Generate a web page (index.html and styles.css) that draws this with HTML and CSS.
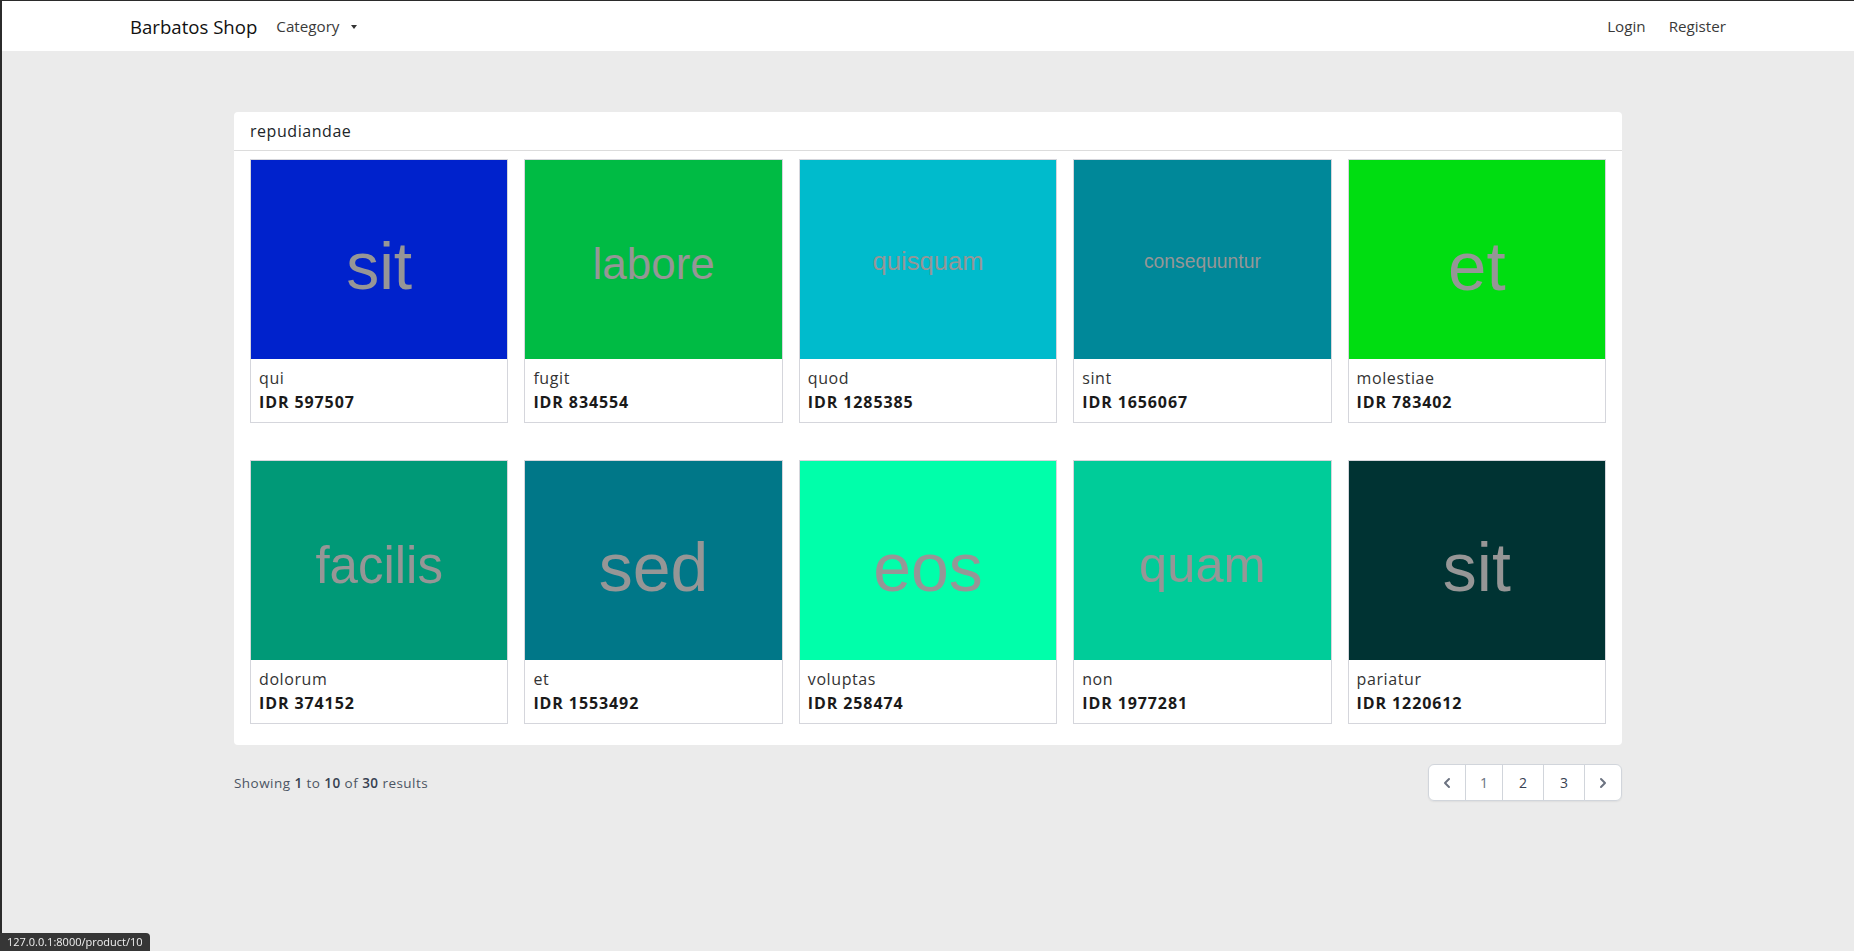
FILE: index.html
```html
<!DOCTYPE html>
<html lang="en">
<head>
<meta charset="utf-8">
<title>Barbatos Shop</title>
<link rel="stylesheet" href="styles.css">
</head>
<body>
<nav class="navbar">
  <div class="nav-inner">
    <div class="nav-left">
      <a class="brand" href="#">Barbatos Shop</a>
      <a class="nav-link dropdown" href="#">Category<span class="caret"></span></a>
    </div>
    <div class="nav-right">
      <a class="nav-link" href="#">Login</a>
      <a class="nav-link" href="#">Register</a>
    </div>
  </div>
</nav>

<main class="main">
  <section class="panel">
    <header class="panel-header">repudiandae</header>
    <div class="grid">
      <a class="card" href="#"><div class="thumb c1"><span class="ph" style="font-size:66px">sit</span></div><div class="card-body"><div class="name">qui</div><div class="price">IDR 597507</div></div></a>
      <a class="card" href="#"><div class="thumb c2"><span class="ph" style="font-size:44px">labore</span></div><div class="card-body"><div class="name">fugit</div><div class="price">IDR 834554</div></div></a>
      <a class="card" href="#"><div class="thumb c3"><span class="ph" style="font-size:25.6px">quisquam</span></div><div class="card-body"><div class="name">quod</div><div class="price">IDR 1285385</div></div></a>
      <a class="card" href="#"><div class="thumb c4"><span class="ph" style="font-size:19.3px">consequuntur</span></div><div class="card-body"><div class="name">sint</div><div class="price">IDR 1656067</div></div></a>
      <a class="card" href="#"><div class="thumb c5"><span class="ph" style="font-size:69px">et</span></div><div class="card-body"><div class="name">molestiae</div><div class="price">IDR 783402</div></div></a>
      <a class="card" href="#"><div class="thumb c6"><span class="ph" style="font-size:51px">facilis</span></div><div class="card-body"><div class="name">dolorum</div><div class="price">IDR 374152</div></div></a>
      <a class="card" href="#"><div class="thumb c7"><span class="ph" style="font-size:68px">sed</span></div><div class="card-body"><div class="name">et</div><div class="price">IDR 1553492</div></div></a>
      <a class="card" href="#"><div class="thumb c8"><span class="ph" style="font-size:68px">eos</span></div><div class="card-body"><div class="name">voluptas</div><div class="price">IDR 258474</div></div></a>
      <a class="card" href="#"><div class="thumb c9"><span class="ph" style="font-size:50.6px">quam</span></div><div class="card-body"><div class="name">non</div><div class="price">IDR 1977281</div></div></a>
      <a class="card" href="#"><div class="thumb c10"><span class="ph" style="font-size:68px">sit</span></div><div class="card-body"><div class="name">pariatur</div><div class="price">IDR 1220612</div></div></a>
    </div>
  </section>

  <div class="pager-row">
    <p class="showing">Showing <b>1</b> to <b>10</b> of <b>30</b> results</p>
    <div class="pager">
      <a class="pg pg-prev" href="#"><svg viewBox="0 0 20 20" width="20" height="20"><path fill="currentColor" fill-rule="evenodd" d="M12.707 5.293a1 1 0 010 1.414L9.414 10l3.293 3.293a1 1 0 01-1.414 1.414l-4-4a1 1 0 010-1.414l4-4a1 1 0 011.414 0z"/></svg></a>
      <span class="pg pg-num current">1</span>
      <a class="pg pg-num" href="#">2</a>
      <a class="pg pg-num" href="#">3</a>
      <a class="pg pg-next" href="#"><svg viewBox="0 0 20 20" width="20" height="20"><path fill="currentColor" fill-rule="evenodd" d="M7.293 14.707a1 1 0 010-1.414L10.586 10 7.293 6.707a1 1 0 011.414-1.414l4 4a1 1 0 010 1.414l-4 4a1 1 0 01-1.414 0z"/></svg></a>
    </div>
  </div>
</main>

<div class="statusbar">127.0.0.1:8000/product/10</div>
</body>
</html>
```

FILE: styles.css
```css
* { box-sizing: border-box; }
html, body { height: 100%; }
body {
  margin: 0;
  background: #ebebeb;
  border-left: 2px solid #2b2b2b;
  border-top: 1px solid #2b2b2b;
  font-family: "Open Sans", "Noto Sans", sans-serif;
  color: #212529;
}
a { text-decoration: none; color: inherit; }

.navbar {
  background: #fff;
  height: 50px;
}
.nav-inner {
  width: 1596px;
  margin: 0 auto;
  height: 100%;
  display: flex;
  align-items: center;
  justify-content: space-between;
}
.nav-left, .nav-right { display: flex; align-items: center; }
.brand {
  font-family: "Open Sans", sans-serif;
  font-size: 18.6px;
  color: #111;
  margin-right: 19px;
}
.nav-link {
  font-family: "Open Sans", sans-serif;
  font-size: 15.2px;
  color: #3a3a3a;
}
.nav-right { gap: 23px; }
.caret {
  display: inline-block;
  width: 0; height: 0;
  margin-left: 12px;
  vertical-align: 3px;
  border-top: 4.5px solid #333;
  border-left: 3.5px solid transparent;
  border-right: 3.5px solid transparent;
}

.main {
  width: 1388px;
  margin: 0 auto;
  padding-top: 61px;
}
.panel {
  background: #fff;
  border-radius: 4px;
}
.panel-header {
  padding: 7px 16px 7px;
  font-size: 16px;
  line-height: 24px;
  letter-spacing: 0.55px;
  color: #212529;
  border-bottom: 1px solid #dcdcdc;
}
.grid {
  display: grid;
  grid-template-columns: repeat(5, 1fr);
  column-gap: 16px;
  row-gap: 37px;
  padding: 8px 16px 21px;
}
.card {
  display: block;
  border: 1px solid #d5d6dc;
  background: #fff;
}
.thumb {
  height: 199px;
  display: flex;
  align-items: center;
  justify-content: center;
  overflow: hidden;
}
.ph {
  font-family: "Liberation Sans", Arial, sans-serif;
  color: #969696;
  line-height: 1;
  padding-top: 0.2em;
  white-space: nowrap;
}
.c1 { background: #0022cc; }
.c2 { background: #00bb44; }
.c3 { background: #00bbcc; }
.c4 { background: #008899; }
.c5 { background: #00dd11; }
.c6 { background: #009977; }
.c7 { background: #007788; }
.c8 { background: #00ffaa; }
.c9 { background: #00cc99; }
.c10 { background: #003333; }

.card-body {
  padding: 7px 8px 8px;
  line-height: 24px;
  font-size: 16px;
}
.name { color: #333; letter-spacing: 0.6px; }
.price { font-weight: 700; color: #1a1a1a; letter-spacing: 0.9px; }

.pager-row {
  display: flex;
  justify-content: space-between;
  align-items: center;
  margin-top: 19px;
}
.showing {
  margin: 0;
  font-size: 13.5px;
  line-height: 20px;
  color: #4b5563;
  letter-spacing: 0.45px;
}
.showing b { font-weight: 600; color: #374151; }
.pager {
  display: inline-flex;
  border-radius: 6px;
  box-shadow: 0 1px 2px rgba(0,0,0,0.06);
}
.pg {
  display: inline-flex;
  align-items: center;
  justify-content: center;
  height: 37px;
  background: #fff;
  border: 1px solid #d1d5db;
  font-size: 14px;
  font-weight: 500;
  color: #374151;
}
.pg + .pg { margin-left: -1px; }
.pg-prev, .pg-next { width: 38px; color: #6b7280; }
.pg-prev { border-radius: 6px 0 0 6px; }
.pg-next { border-radius: 0 6px 6px 0; }
.pg-num.current { color: #6b7280; width: 38px; }
.pg-num:not(.current) { width: 42px; }

.statusbar {
  position: fixed;
  left: 0;
  bottom: 0;
  height: 18px;
  padding: 0 7px 0 7px;
  background: #363636;
  color: #f0f0f0;
  font-family: "Open Sans", sans-serif;
  font-size: 11px;
  line-height: 18px;
  border-top-right-radius: 4px;
}
```
